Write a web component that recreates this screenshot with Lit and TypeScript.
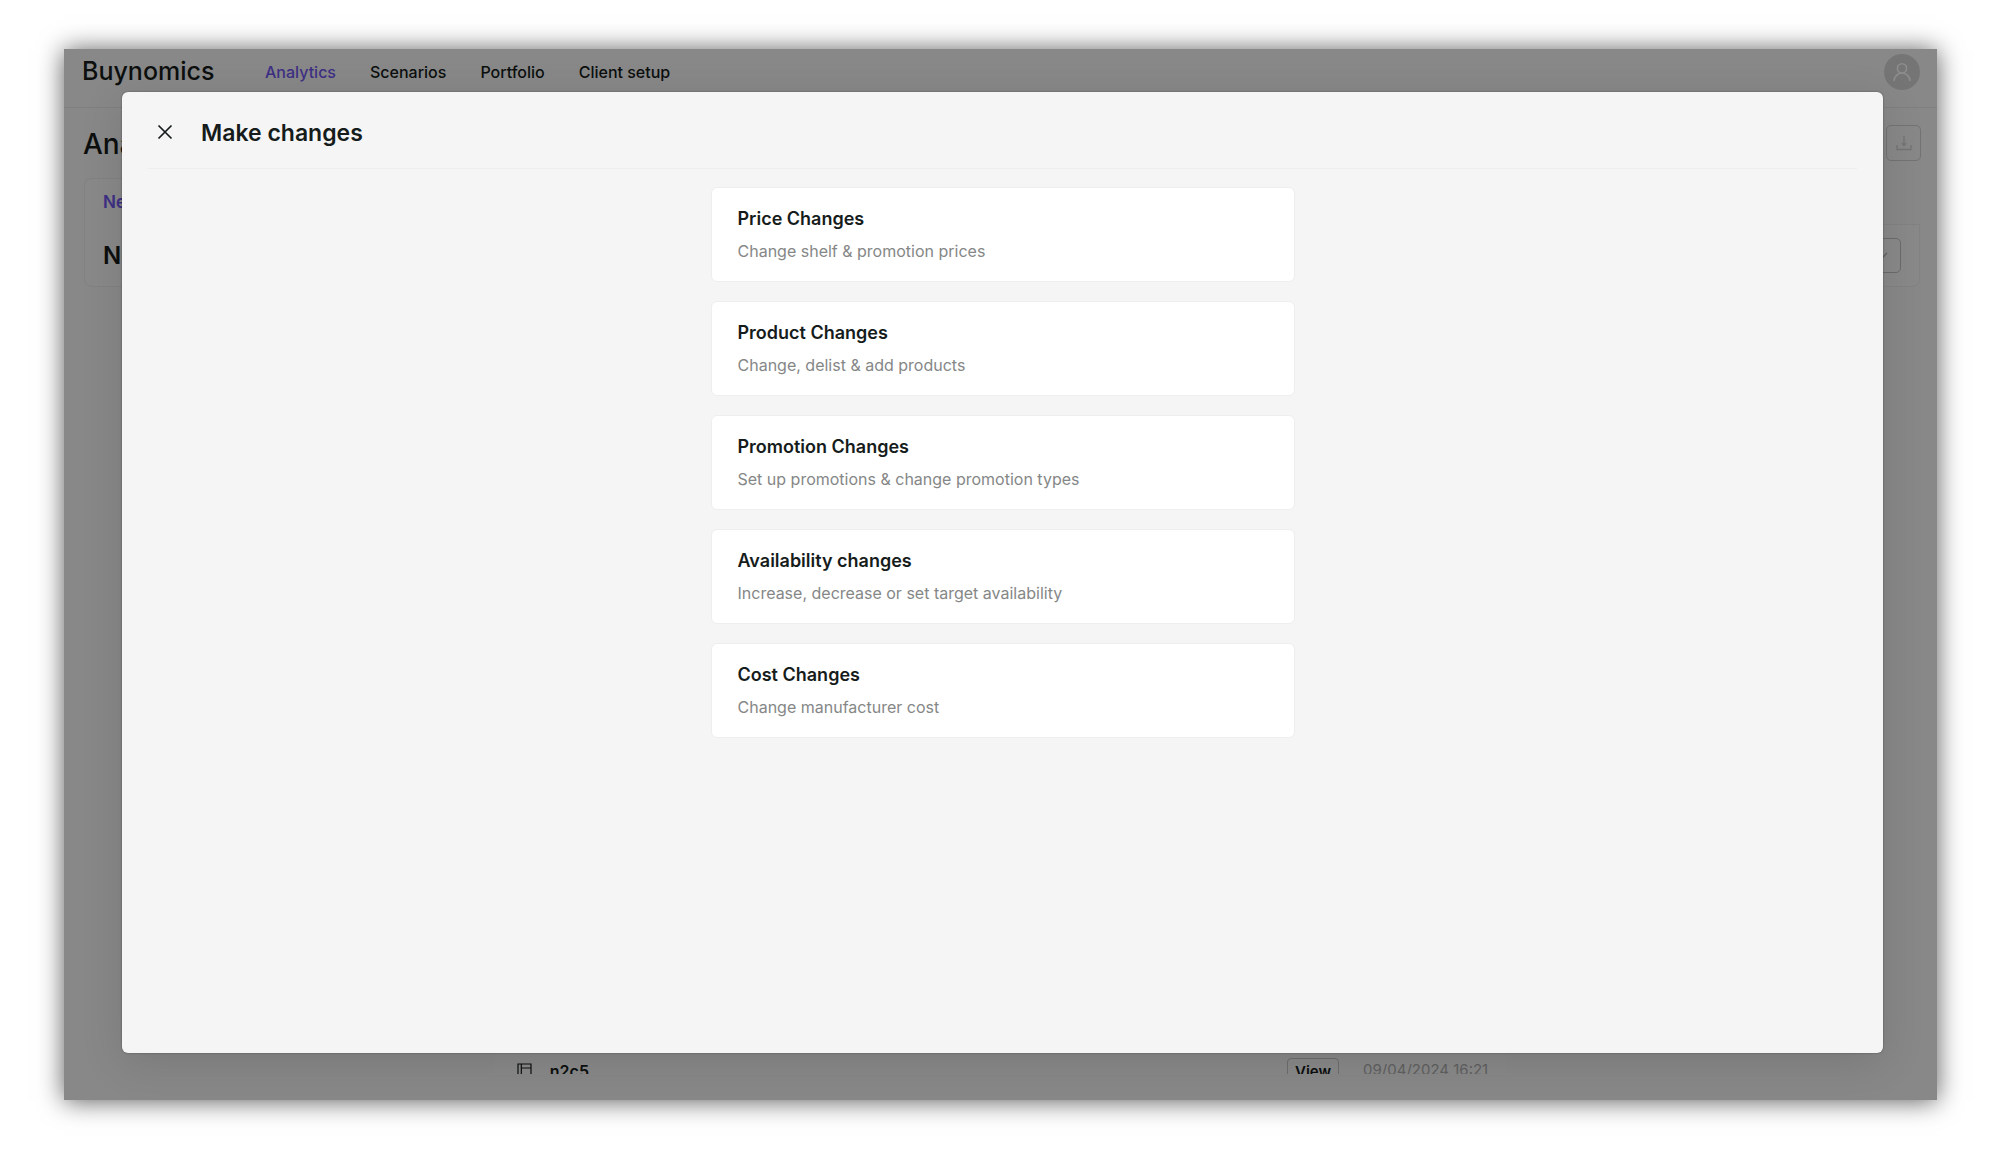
import { LitElement, html, css } from "lit";
import { customElement } from "lit/decorators.js";

const NAV = ["Analytics", "Scenarios", "Portfolio", "Client setup"];

const CHANGES = [
  { title: "Price Changes", text: "Change shelf & promotion prices" },
  { title: "Product Changes", text: "Change, delist & add products" },
  { title: "Promotion Changes", text: "Set up promotions & change promotion types" },
  { title: "Availability changes", text: "Increase, decrease or set target availability" },
  { title: "Cost Changes", text: "Change manufacturer cost" },
];

const base = css`
  * {
    box-sizing: border-box;
  }
  h1, h2, h3, p, ul {
    margin: 0;
    padding: 0;
  }
  button {
    font: inherit;
    color: inherit;
    margin: 0;
    cursor: pointer;
  }
  svg {
    display: block;
    fill: none;
    stroke: currentColor;
  }
`;

/* Page that stays visible, dimmed, behind the dialog. */
@customElement("analytics-page")
class AnalyticsPage extends LitElement {
  static styles = [
    base,
    css`
      :host {
        display: flex;
        flex-direction: column;
        flex: 1;
        min-height: 0;
        background: #f7f7f7;
        color: #161c1b;
      }
      .header {
        display: flex;
        align-items: center;
        height: 59px;
        padding: 0 17px 12px 18px;
        border-bottom: 1px solid #e8e8e8;
      }
      .logo {
        font-size: 25px;
        line-height: 32px;
        font-weight: 500;
        width: 183px;
        padding-bottom: 2px;
      }
      .nav {
        display: flex;
        gap: 34px;
        flex: 1;
      }
      .link {
        font-size: 16px;
        line-height: 24px;
        font-weight: 500;
        color: inherit;
        text-decoration: none;
      }
      .current {
        color: #7157f2;
      }
      .avatar {
        display: grid;
        place-items: center;
        width: 36px;
        height: 36px;
        padding: 0;
        border: 0;
        border-radius: 50%;
        background: #d6d6d6;
        color: #fff;
      }
      .heading {
        display: flex;
        align-items: flex-start;
        justify-content: space-between;
        height: 70px;
        padding: 17px 16px 0 19px;
      }
      .title {
        font-size: 28px;
        line-height: 39px;
        font-weight: 500;
      }
      .download {
        display: grid;
        place-items: center;
        width: 35px;
        height: 36px;
        padding: 0;
        border: 1px solid #d2d2d2;
        border-radius: 5px;
        background: transparent;
        color: #d2d2d2;
      }
      .card {
        margin: 0 17px 0 20px;
      }
      .tab {
        display: block;
        position: relative;
        width: 160px;
        height: 47px;
        margin-bottom: -1px;
        padding: 0 18px;
        border: 1px solid #ededed;
        border-bottom: 0;
        border-radius: 8px 8px 0 0;
        background: #fafafa;
        color: #7157f2;
        font-size: 17px;
        line-height: 24px;
        font-weight: 600;
        text-align: left;
      }
      .panel {
        display: flex;
        align-items: center;
        justify-content: space-between;
        height: 63px;
        padding: 0 18px;
        border: 1px solid #ededed;
        border-radius: 0 0 8px 8px;
        background: #fafafa;
      }
      .name {
        font-size: 24px;
        line-height: 32px;
        font-weight: 600;
      }
      .menu {
        display: flex;
        align-items: center;
        justify-content: flex-end;
        width: 60px;
        height: 35px;
        padding: 0 12px;
        border: 1px solid #c4c4c4;
        border-radius: 5px;
        background: transparent;
        color: #b4b4b4;
      }
      .list {
        display: flex;
        align-items: flex-start;
        width: 54%;
        height: 28px;
        margin: auto auto 26px;
        padding: 12px 18px 0 22px;
        overflow: hidden;
        background: #fafafa;
      }
      .book {
        margin: 5px 18px 0 0;
      }
      .item {
        flex: 1;
        font-size: 16px;
        line-height: 26px;
        font-weight: 600;
      }
      .view {
        flex: none;
        width: 52px;
        height: 28px;
        padding: 0;
        border: 1px solid #c8c8c8;
        border-radius: 4px;
        background: transparent;
        font-size: 15px;
        line-height: 24px;
        font-weight: 600;
      }
      .date {
        margin-left: 24px;
        font-size: 15px;
        line-height: 24px;
        color: #b0b0b0;
      }
    `,
  ];

  render() {
    return html`
      <header class="header">
        <span class="logo">Buynomics</span>
        <nav class="nav">
          ${NAV.map((label, i) => html`<a href="#" class="link ${i === 0 ? "current" : ""}">${label}</a>`)}
        </nav>
        <button class="avatar" aria-label="Account">
          <svg width="20" height="20" viewBox="0 0 20 20" stroke-width="1.6">
            <circle cx="10" cy="6.4" r="4.6" />
            <path d="M2 19a8 8 0 0 1 16 0" />
          </svg>
        </button>
      </header>
      <div class="heading">
        <h1 class="title">Analytics</h1>
        <button class="download" aria-label="Download">
          <svg width="16" height="16" viewBox="0 0 16 16" stroke-width="1.3">
            <path d="M1 10v4.5h14V10M8 1v9.5M5.8 8.2 8 10.5l2.2-2.3" />
          </svg>
        </button>
      </div>
      <section class="card">
        <button class="tab">New</button>
        <div class="panel">
          <h2 class="name">New</h2>
          <button class="menu" aria-label="Options">
            <svg width="10" height="8" viewBox="0 0 10 8" stroke-width="1.4">
              <path d="M1 1l4 4 4-4" />
            </svg>
          </button>
        </div>
      </section>
      <div class="list">
        <svg class="book" width="15" height="16" viewBox="0 0 15 16" stroke-width="1.2">
          <path d="M1 1h13v14H1zM4.3 1v14M4.3 5H14" />
        </svg>
        <span class="item">n2c5</span>
        <button class="view">View</button>
        <span class="date">09/04/2024 16:21</span>
      </div>
    `;
  }
}

@customElement("changes-dialog")
class ChangesDialog extends LitElement {
  static styles = [
    base,
    css`
      :host {
        display: block;
        padding: 0 26px;
        border-radius: 6px;
        background: #f5f5f5;
        color: #161c1b;
        box-shadow: 0 0 2px rgba(0, 0, 0, 0.4), 0 10px 44px rgba(0, 0, 0, 0.12);
      }
      .top {
        display: flex;
        align-items: center;
        gap: 22px;
        height: 77px;
        padding: 4px 3px 0;
        border-bottom: 1px solid #eeeeee;
      }
      .close {
        display: grid;
        place-items: center;
        width: 28px;
        height: 28px;
        padding: 0;
        border: 0;
        background: transparent;
      }
      .title {
        font-size: 23px;
        line-height: 32px;
        font-weight: 600;
        padding-top: 1px;
      }
      .options {
        display: flex;
        flex-direction: column;
        gap: 19px;
        width: min(100%, 584px);
        margin: 18px auto;
      }
      .option {
        display: flex;
        flex-direction: column;
        gap: 8px;
        height: 95px;
        padding: 18px 26px;
        border: 1px solid #eeeeee;
        border-radius: 6px;
        background: #fff;
        text-align: left;
      }
      .name {
        font-size: 18px;
        line-height: 25px;
        font-weight: 600;
      }
      .text {
        font-size: 16px;
        line-height: 24px;
        font-weight: 400;
        color: #858787;
      }
    `,
  ];

  render() {
    return html`
      <header class="top">
        <button class="close" aria-label="Close">
          <svg width="16" height="16" viewBox="0 0 16 16" stroke-width="1.7">
            <path d="M1.5 1.5l13 13M14.5 1.5l-13 13" />
          </svg>
        </button>
        <h2 class="title">Make changes</h2>
      </header>
      <div class="options">
        ${CHANGES.map(
          (c) => html`<button class="option">
            <span class="name">${c.title}</span>
            <span class="text">${c.text}</span>
          </button>`
        )}
      </div>
    `;
  }
}

@customElement("app-root")
class AppRoot extends LitElement {
  static styles = [
    base,
    css`
      :host {
        display: flex;
        box-sizing: border-box;
        min-height: 100vh;
        padding: 49px 63px 54px 64px;
        background: #fff;
        font-family: Inter, "Liberation Sans", sans-serif;
      }
      .window {
        position: relative;
        display: flex;
        flex: 1;
        min-width: 0;
        box-shadow: 0 1px 24px rgba(0, 0, 0, 0.65);
      }
      .backdrop {
        position: absolute;
        inset: 0;
        background: rgba(0, 0, 0, 0.45);
      }
      .dialog {
        position: absolute;
        inset: 43px 54px 47px 58px;
      }
    `,
  ];

  render() {
    return html`
      <main class="window">
        <analytics-page></analytics-page>
        <div class="backdrop"></div>
        <changes-dialog class="dialog" role="dialog" aria-label="Make changes"></changes-dialog>
      </main>
    `;
  }
}
